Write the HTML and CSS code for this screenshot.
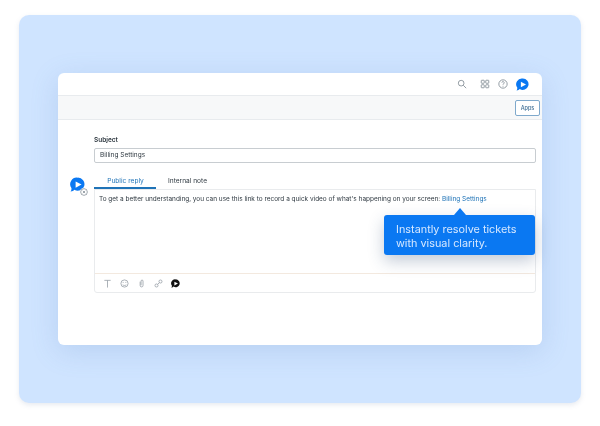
FILE: index.html
```html
<!DOCTYPE html>
<html lang="en">
<head>
<meta charset="utf-8">
<title>Ticket reply</title>
<link rel="stylesheet" href="styles.css">
</head>
<body>
<main class="panel">
  <section class="card">
    <header class="topbar">
      <svg class="icon" viewBox="0 0 12 12"><circle cx="5" cy="5" r="3.4"/><path d="M7.6 7.6 11 11"/></svg>
      <svg class="icon icon-grid" viewBox="0 0 12 12"><rect x="1.5" y="1.5" width="3.6" height="3.6" rx=".6"/><rect x="6.9" y="1.5" width="3.6" height="3.6" rx=".6"/><rect x="1.5" y="6.9" width="3.6" height="3.6" rx=".6"/><rect x="6.9" y="6.9" width="3.6" height="3.6" rx=".6"/></svg>
      <svg class="icon" viewBox="0 0 12 12"><circle cx="6" cy="6" r="5"/><path d="M4.6 4.400a1.400 1.400 0 1 1 2.100 1.300c-.5.300-.7.600-.7 1.200M6 8.200v1"/></svg>
      <svg class="brand brand-top" viewBox="0 0 24 24"><path class="brand-fill" d="M12.500 1a10.500 10.500 0 1 1-5.600 19.300C5.600 22 3.600 23.100 1 23c1.200-1.400 1.500-3 1.300-5.500A10.500 10.500 0 0 1 12.500 1Z"/><path class="brand-play" d="M9 7 18.500 12 9 17Z"/></svg>
    </header>
    <div class="subbar"><button class="apps">Apps</button></div>
    <div class="content">
      <div class="side">
        <svg class="brand brand-side" viewBox="0 0 24 24"><path class="brand-fill" d="M12.500 1a10.500 10.500 0 1 1-5.600 19.300C5.600 22 3.600 23.100 1 23c1.200-1.400 1.500-3 1.300-5.500A10.500 10.500 0 0 1 12.500 1Z"/><path class="brand-play" d="M9 7 18.500 12 9 17Z"/></svg>
        <svg class="badge" viewBox="0 0 10 10"><circle cx="5" cy="5" r="4.200"/><path d="M3.500 3.500 6.500 6.500M6.500 3.500 3.500 6.500"/></svg>
      </div>
      <div class="form">
        <label class="label">Subject</label>
        <div class="input">Billing Settings</div>
        <nav class="tabs">
          <span class="tab tab-active">Public reply</span>
          <span class="tab">Internal note</span>
        </nav>
        <div class="editor">
          <p class="message">To get a better understanding, you can use this link to record a quick video of what's happening on your screen: <a class="link">Billing Settings</a></p>
          <div class="toolbar">
            <svg class="tool" viewBox="0 0 10 10"><path d="M1.500 1.500h7M5 1.500v8"/></svg>
            <svg class="tool" viewBox="0 0 10 10"><circle cx="5" cy="5" r="4"/><path d="M3 6.500c1 .9 3 .9 4 0M3 3.800h1M6 3.800h1"/></svg>
            <svg class="tool" viewBox="0 0 10 10"><path d="M3.500 3v4.200a1.600 1.600 0 0 0 3.200 0V2.300a1.100 1.100 0 0 0-2.200 0V7"/></svg>
            <svg class="tool" viewBox="0 0 10 10"><circle cx="2.800" cy="7.200" r="1.700"/><circle cx="7.200" cy="2.800" r="1.700"/><path d="M4 6l2-2"/></svg>
            <svg class="tool-brand" viewBox="0 0 24 24"><path d="M12.500 1a10.500 10.500 0 1 1-5.600 19.300C5.600 22 3.600 23.100 1 23c1.200-1.400 1.500-3 1.300-5.500A10.500 10.500 0 0 1 12.500 1Z"/><path class="brand-play" d="M9 7 18.500 12 9 17Z"/></svg>
          </div>
        </div>
      </div>
    </div>
    <aside class="tooltip">Instantly resolve tickets with visual clarity.</aside>
  </section>
</main>
</body>
</html>
```
FILE: styles.css
```css
* { box-sizing: border-box; }
html, body { margin: 0; height: 100%; background: #fff; }
body { font-family: "Inter", "Liberation Sans", sans-serif; overflow: hidden; }
.panel {
  width: 562px; height: 388px; margin: 15px 0 0 19px; padding: 58px 39px;
  background: #cfe4ff; border-radius: 10px;
  box-shadow: 0 2px 5px rgba(120,140,170,.18);
}
.card {
  position: relative; width: 484px; height: 272px; background: #fff; border-radius: 6px;
  box-shadow: 0 6px 28px rgba(90,130,190,.2);
  filter: blur(.25px);
}
.topbar {
  height: 23px; display: flex; align-items: center; justify-content: flex-end;
  gap: 8px; padding: 0 13px 0 0; border-bottom: 1px solid #e8ebee;
}
.icon { width: 10px; height: 10px; fill: none; stroke: #7f8a93; stroke-width: 1; }
.icon-grid { margin-left: 5px; }
.brand { display: block; }
.brand-fill { fill: #0a78f2; }
.brand-play { fill: #fff; }
.brand-top { width: 13px; height: 13px; }
.subbar {
  height: 24px; display: flex; align-items: center; justify-content: flex-end;
  padding-right: 2px; background: #f7f8f9; border-bottom: 1px solid #e8ebee;
}
.apps {
  width: 25px; height: 16px; padding: 0; font: 500 5.5px "Inter", sans-serif; color: #3f6f96;
  background: #fff; border: 1px solid #7fa9cc; border-radius: 2px;
}
.content { display: flex; padding: 15px 6px 0 12px; }
.side { position: relative; width: 24px; padding-top: 42px; }
.brand-side { width: 15px; height: 15px; }
.badge {
  position: absolute; left: 10px; top: 53px; width: 8px; height: 8px; background: #fff; border-radius: 50%;
  fill: none; stroke: #77828c; stroke-width: .9;
}
.form { flex: 1; min-width: 0; }
.label { display: block; font-size: 6.5px; line-height: 10px; font-weight: 600; color: #2f3941; }
.input {
  height: 15px; margin-top: 3px; padding-left: 5px; font-size: 6.5px; line-height: 13px; color: #2f3941;
  border: 1px solid #c8cdd1; border-radius: 2px;
}
.tabs { display: flex; margin-top: 10px; height: 16px; }
.tab { width: 62px; padding: 1px 0 0 1px; text-align: center; font-size: 6.6px; line-height: 14px; color: #2f3941; }
.tab-active { color: #1f73b7; border-bottom: 2px solid #1f73b7; }
.editor {
  height: 104px; display: flex; flex-direction: column; justify-content: space-between;
  border: 1px solid #e9ebed; border-radius: 0 0 3px 3px;
}
.message { margin: 0; padding: 4px 4px; font-size: 6.46px; line-height: 10px; color: #2f3941; white-space: nowrap; }
.link { color: #1f73b7; }
.toolbar {
  height: 19px; display: flex; align-items: center; gap: 8px; padding-left: 7.5px;
  border-top: 1px solid #f3e9df;
}
.tool { width: 9px; height: 9px; fill: none; stroke: #98a0a7; stroke-width: .9; }
.tool-brand { width: 9px; height: 9px; fill: #111; }
.tooltip {
  position: absolute; left: 326px; top: 142px; width: 151px; height: 40px; padding: 7px 12px;
  font-size: 10.85px; line-height: 14px; color: #d6e8ff; background: #0a78f2; border-radius: 3px;
  box-shadow: 0 6px 16px rgba(40,70,110,.28);
}
.tooltip::before {
  content: ""; position: absolute; left: 70px; top: -7px;
  border: 6px solid transparent; border-top: 0; border-bottom: 7px solid #0a78f2;
}
```
